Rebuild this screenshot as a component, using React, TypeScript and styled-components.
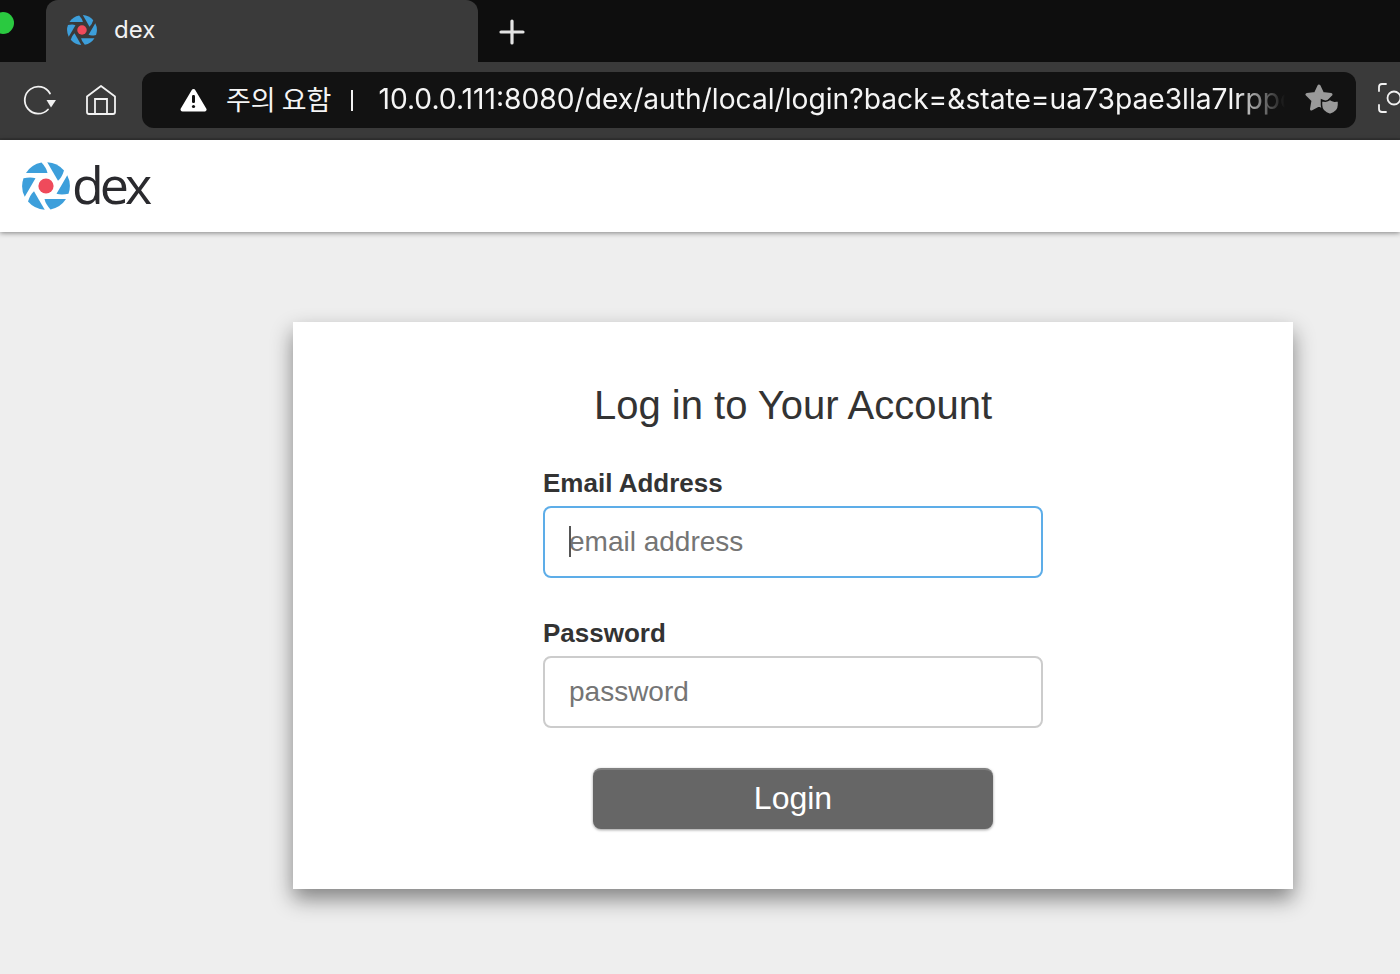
import React from "react";
import styled, { createGlobalStyle } from "styled-components";

const GlobalStyle = createGlobalStyle`
  html, body {
    margin: 0;
    padding: 0;
    height: 100%;
    overflow: hidden;
    background: #eeeeee;
  }
  * {
    box-sizing: border-box;
  }
`;

const blades = [0, 60, 120, 180, 240, 300];

const DexMark: React.FC<{ size: number }> = ({ size }) => (
  <svg width={size} height={size} viewBox="-24 -24 48 48">
    {blades.map((angle) => (
      <path
        key={angle}
        transform={`rotate(${angle})`}
        d="M-20 -13 A23.8 23.8 0 0 1 -4.5 -23.4 Q0.5 -18 1.5 -13 Q-10 -13 -20 -13 Z"
        fill="#3d9fdb"
      />
    ))}
    <circle r="7.6" fill="#ef4a5b" />
  </svg>
);

const ReloadIcon = () => (
  <svg width="34" height="34" viewBox="0 0 34 34" fill="none">
    <path
      d="M27 10.5 A13.5 13.5 0 1 0 25 26.5"
      stroke="#f2f2f2"
      strokeWidth="1.8"
      strokeLinecap="round"
    />
    <path d="M23.5 17 H33 L28 24.5 Z" fill="#f2f2f2" />
  </svg>
);

const HomeIcon = () => (
  <svg width="32" height="32" viewBox="0 0 32 32" fill="none">
    <path
      d="M2 12.5 L16 2 L30 12.5 V28 Q30 30 28 30 H4 Q2 30 2 28 Z"
      stroke="#f2f2f2"
      strokeWidth="1.8"
      strokeLinejoin="round"
    />
    <path d="M10 30 V15 H22 V30" stroke="#f2f2f2" strokeWidth="1.8" />
  </svg>
);

const WarningIcon = () => (
  <svg width="27" height="25" viewBox="0 0 27 25">
    <path
      d="M13.5 3 L24.5 21.5 H2.5 Z"
      fill="#ffffff"
      stroke="#ffffff"
      strokeWidth="4"
      strokeLinejoin="round"
    />
    <rect x="12" y="7" width="3" height="8" rx="1.2" fill="#121212" />
    <circle cx="13.5" cy="18.5" r="1.6" fill="#121212" />
  </svg>
);

const StarShieldIcon = () => (
  <svg width="34" height="32" viewBox="0 0 34 32">
    <path
      d="M14 3 L17.5 10.5 L26 11.5 L20 17.5 L21.5 26 L14 22 L6.5 26 L8 17.5 L2 11.5 L10.5 10.5 Z"
      fill="#9a9a9a"
      stroke="#9a9a9a"
      strokeWidth="3"
      strokeLinejoin="round"
    />
    <path
      d="M16.5 17 Q21 19.5 25 16.5 Q29 19.5 33.5 17 V22 Q33.5 29 25 31.5 Q16.5 29 16.5 22 Z"
      fill="#9a9a9a"
      stroke="#121212"
      strokeWidth="1.5"
    />
  </svg>
);

const CaptureIcon = () => (
  <svg width="34" height="32" viewBox="0 0 34 32" fill="none">
    <path
      d="M2 9 V5 Q2 2 5 2 H9 M25 2 H29 Q32 2 32 5 V9 M32 23 V27 Q32 30 29 30 H25 M9 30 H5 Q2 30 2 27 V23"
      stroke="#f2f2f2"
      strokeWidth="1.8"
      strokeLinecap="round"
    />
    <circle cx="17" cy="16" r="6.5" stroke="#f2f2f2" strokeWidth="1.8" />
  </svg>
);

const PlusIcon = () => (
  <svg width="26" height="26" viewBox="0 0 26 26">
    <path d="M13 2 V24 M2 13 H24" stroke="#e4e4e4" strokeWidth="3.2" strokeLinecap="round" />
  </svg>
);

const Page = styled.div`
  width: 1400px;
  height: 974px;
  display: flex;
  flex-direction: column;
  overflow: hidden;
  background: #eeeeee;
`;

const TabStrip = styled.div`
  height: 62px;
  flex: none;
  display: flex;
  background: #0e0e0e;
`;

const TrafficLight = styled.div`
  width: 22px;
  height: 22px;
  flex: none;
  margin: 12px 32px 0 -8px;
  border-radius: 50%;
  background: #2ac940;
`;

const Tab = styled.div`
  width: 432px;
  display: flex;
  align-items: center;
  gap: 17px;
  padding: 0 0 2px 21px;
  background: #3a3a3a;
  border-radius: 12px 12px 0 0;
`;

const TabTitle = styled.span`
  font-family: "Inter", "Liberation Sans", sans-serif;
  font-size: 24px;
  color: #f2f2f2;
  margin-top: -2px;
`;

const NewTab = styled.div`
  display: flex;
  align-items: center;
  padding: 1px 0 0 21px;
`;

const Toolbar = styled.div`
  height: 78px;
  flex: none;
  display: flex;
  align-items: center;
  padding-left: 23px;
  background: #3a3a3a;
  border-bottom: 2px solid #333333;
`;

const ToolButton = styled.div<{ $width: number }>`
  width: ${(p) => p.$width}px;
  flex: none;
  display: flex;
  align-items: center;
`;

const AddressBar = styled.div`
  width: 1214px;
  height: 56px;
  flex: none;
  display: flex;
  align-items: center;
  padding: 0 17px 0 38px;
  background: #121212;
  border-radius: 12px;
`;

const Warning = styled.span`
  font-family: "Noto Sans CJK KR", "Inter", sans-serif;
  font-size: 27px;
  color: #f5f5f5;
  margin: 0 0 3px 19px;
  white-space: nowrap;
`;

const Divider = styled.span`
  width: 2px;
  height: 21px;
  flex: none;
  margin: 0 25px 0 20px;
  background: #f0f0f0;
`;

const Url = styled.div`
  flex: 1;
  min-width: 0;
  margin-bottom: 3px;
  overflow: hidden;
  white-space: nowrap;
  font-family: "Inter", "Liberation Sans", sans-serif;
  font-size: 28.2px;
  color: #f5f5f5;
  -webkit-mask-image: linear-gradient(to right, #000 94.5%, transparent 100%);
  mask-image: linear-gradient(to right, #000 94.5%, transparent 100%);
`;

const Star = styled.div`
  flex: none;
  display: flex;
  margin: 0 0 2px 20px;
`;

const Capture = styled.div`
  flex: none;
  display: flex;
  margin: 0 0 4px 21px;
`;

const NavBar = styled.header`
  height: 92px;
  flex: none;
  display: flex;
  align-items: center;
  padding-left: 22px;
  background: #ffffff;
  box-shadow: 0 1px 5px rgba(0, 0, 0, 0.45);
  position: relative;
`;

const Brand = styled.span`
  font-family: "Open Sans", "Liberation Sans", sans-serif;
  font-size: 52px;
  line-height: 1;
  letter-spacing: -4px;
  color: #2a2a2e;
  margin: -4px 0 0 2px;
`;

const Theme = styled.main`
  flex: 1;
  padding: 90px 0 0 293px;
`;

const Card = styled.section`
  width: 1000px;
  height: 567px;
  display: flex;
  flex-direction: column;
  align-items: center;
  padding-top: 59px;
  background: #ffffff;
  box-shadow: 0 10px 20px rgba(0, 0, 0, 0.45);
`;

const Title = styled.h2`
  margin: 0 0 38px;
  font-family: "Liberation Sans", Arial, sans-serif;
  font-size: 40px;
  font-weight: 400;
  line-height: 48px;
  color: #333333;
`;

const Field = styled.div`
  width: 500px;
  margin-bottom: 39px;
`;

const Label = styled.label`
  display: block;
  height: 39px;
  font-family: "Liberation Sans", Arial, sans-serif;
  font-size: 26px;
  font-weight: 700;
  line-height: 33px;
  color: #333333;
`;

const InputWrap = styled.div`
  position: relative;
`;

const Input = styled.input<{ $focused?: boolean }>`
  display: block;
  width: 100%;
  height: 72px;
  padding: 0 24px;
  font-family: "Liberation Sans", Arial, sans-serif;
  font-size: 28px;
  color: #333333;
  background: #ffffff;
  border: 2px solid ${(p) => (p.$focused ? "#5dade8" : "#cccccc")};
  border-radius: 8px;
  outline: none;

  &::placeholder {
    color: #757575;
    opacity: 1;
  }
`;

const Caret = styled.span`
  position: absolute;
  left: 26px;
  top: 20px;
  width: 2px;
  height: 31px;
  background: #555555;
`;

const LoginButton = styled.button`
  width: 400px;
  height: 61px;
  margin-top: 1px;
  padding: 0 0 2px;
  font-family: "Liberation Sans", Arial, sans-serif;
  font-size: 32px;
  color: #ffffff;
  background: #666666;
  border: none;
  border-top: 2px solid #808080;
  border-radius: 8px;
  box-shadow: 0 1px 3px rgba(0, 0, 0, 0.4);
`;

export default function App() {
  return (
    <Page>
      <GlobalStyle />
      <TabStrip>
        <TrafficLight />
        <Tab>
          <DexMark size={30} />
          <TabTitle>dex</TabTitle>
        </Tab>
        <NewTab>
          <PlusIcon />
        </NewTab>
      </TabStrip>
      <Toolbar>
        <ToolButton $width={62}>
          <ReloadIcon />
        </ToolButton>
        <ToolButton $width={57}>
          <HomeIcon />
        </ToolButton>
        <AddressBar>
          <WarningIcon />
          <Warning>주의 요함</Warning>
          <Divider />
          <Url>10.0.0.111:8080/dex/auth/local/login?back=&amp;state=ua73pae3lla7lrppc</Url>
          <Star>
            <StarShieldIcon />
          </Star>
        </AddressBar>
        <Capture>
          <CaptureIcon />
        </Capture>
      </Toolbar>
      <NavBar>
        <DexMark size={48} />
        <Brand>dex</Brand>
      </NavBar>
      <Theme>
        <Card>
          <Title>Log in to Your Account</Title>
          <Field>
            <Label htmlFor="login">Email Address</Label>
            <InputWrap>
              <Input id="login" $focused placeholder="email address" readOnly />
              <Caret />
            </InputWrap>
          </Field>
          <Field>
            <Label htmlFor="password">Password</Label>
            <InputWrap>
              <Input id="password" placeholder="password" readOnly />
            </InputWrap>
          </Field>
          <LoginButton>Login</LoginButton>
        </Card>
      </Theme>
    </Page>
  );
}
